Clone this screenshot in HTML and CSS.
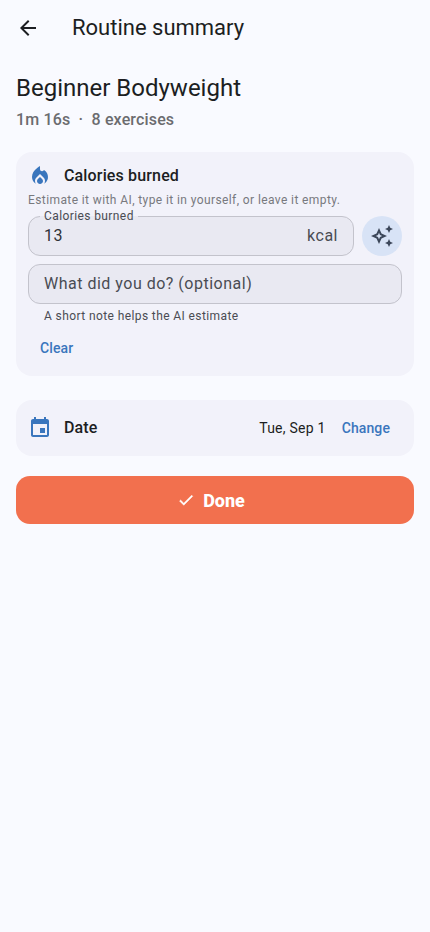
FILE: index.html
```html
<!DOCTYPE html>
<html lang="en">
<head>
<meta charset="utf-8">
<meta name="viewport" content="width=device-width, initial-scale=1">
<title>Routine summary</title>
<link rel="stylesheet" href="styles.css">
</head>
<body>
<header class="app-bar">
  <button class="back" aria-label="Back"><svg class="icon" viewBox="0 0 24 24"><path d="M20 11H7.83l5.59-5.59L12 4l-8 8 8 8 1.41-1.41L7.83 13H20v-2z"/></svg></button>
  <h1 class="app-title">Routine summary</h1>
</header>
<main class="content">
  <h2 class="routine-name">Beginner Bodyweight</h2>
  <p class="routine-meta">1m 16s &nbsp;·&nbsp; 8 exercises</p>

  <section class="card calories">
    <div class="card-head">
      <svg class="icon accent" viewBox="0 0 24 24"><path d="M16 6l-.44.55C14.38 8.02 12 7.19 12 5.3V2S4 6 4 13c0 2.92 1.56 5.47 3.89 6.86-.56-.79-.89-1.76-.89-2.8 0-1.32.52-2.56 1.47-3.5L12 10.1l3.53 3.47c.95.93 1.47 2.17 1.47 3.5 0 1.02-.31 1.96-.85 2.75 1.89-1.15 3.29-3.06 3.71-5.3.66-3.55-1.07-6.9-3.86-8.52z"/><path d="M12 12.9l-2.13 2.09C9.31 15.55 9 16.28 9 17.06 9 18.68 10.35 20 12 20s3-1.32 3-2.94c0-.78-.31-1.52-.87-2.07L12 12.9z"/></svg>
      <h3 class="card-title">Calories burned</h3>
    </div>
    <p class="hint">Estimate it with AI, type it in yourself, or leave it empty.</p>
    <div class="calorie-row">
      <div class="field">
        <span class="field-label">Calories burned</span>
        <span class="value">13</span>
        <span class="unit">kcal</span>
      </div>
      <button class="ai-button" aria-label="Estimate with AI"><svg class="icon" viewBox="0 0 24 24"><path d="M19 9l1.25-2.75L23 5l-2.75-1.25L19 1l-1.25 2.75L15 5l2.75 1.25L19 9zm0 6l-1.25 2.75L15 19l2.75 1.25L19 23l1.25-2.75L23 19l-2.75-1.25L19 15zm-7.5-5.5L9 4 6.5 9.5 1 12l5.5 2.5L9 20l2.5-5.5L17 12l-5.5-2.5zm-1.51 3.49L9 15.17l-.99-2.18L5.83 12l2.18-.99L9 8.83l.99 2.18 2.18.99-2.18.99z"/></svg></button>
    </div>
    <div class="field note"><span class="placeholder">What did you do? (optional)</span></div>
    <p class="helper">A short note helps the AI estimate</p>
    <button class="text-button clear">Clear</button>
  </section>

  <section class="card date">
    <svg class="icon accent" viewBox="0 0 24 24"><path d="M17 12h-5v5h5v-5zM16 1v2H8V1H6v2H5c-1.11 0-1.99.9-1.99 2L3 19c0 1.1.89 2 2 2h14c1.1 0 2-.9 2-2V5c0-1.1-.9-2-2-2h-1V1h-2zm3 18H5V8h14v11z"/></svg>
    <h3 class="card-title">Date</h3>
    <span class="date-value">Tue, Sep 1</span>
    <button class="text-button">Change</button>
  </section>

  <button class="done"><svg class="check" viewBox="0 0 24 24"><path d="M9 16.17L4.83 12l-1.42 1.41L9 19 21 7l-1.41-1.41z"/></svg><span>Done</span></button>
</main>
</body>
</html>
```

FILE: styles.css
```css
* { box-sizing: border-box; }

body {
  margin: 0;
  min-height: 100vh;
  background: #f9faff;
  color: #1c1e22;
  font-family: Roboto, "Liberation Sans", sans-serif;
}

h1, h2, h3, p { margin: 0; }

button {
  padding: 0;
  border: 0;
  background: none;
  color: inherit;
  font: inherit;
}

.icon {
  display: block;
  flex: none;
  width: 24px;
  height: 24px;
  fill: currentColor;
}

.accent { color: #3a76bd; }

.app-bar {
  display: flex;
  align-items: center;
  height: 56px;
}

.back {
  display: grid;
  place-items: center;
  width: 56px;
  height: 56px;
}

.app-title {
  margin-left: 16px;
  font-size: 22px;
  line-height: 28px;
  font-weight: 400;
}

.content { padding: 16px; }

.routine-name {
  font-size: 24px;
  line-height: 32px;
  font-weight: 400;
}

.routine-meta {
  margin-top: 4px;
  color: #6b6c6f;
  font-size: 16px;
  line-height: 24px;
  font-weight: 500;
  letter-spacing: 0.15px;
}

.card {
  border-radius: 16px;
  background: #f2f2fa;
}

.calories {
  height: 224px;
  margin-top: 20px;
  padding: 12px 12px 0;
}

.card-head {
  display: flex;
  align-items: center;
  gap: 12px;
  height: 24px;
}

.card-title {
  font-size: 16px;
  line-height: 24px;
  font-weight: 500;
  letter-spacing: 0.15px;
}

.hint {
  margin-top: 4px;
  color: #78797e;
  font-size: 12px;
  line-height: 16px;
  letter-spacing: 0.4px;
}

.calorie-row {
  display: flex;
  gap: 8px;
  margin-top: 8px;
}

.field {
  position: relative;
  display: flex;
  flex: 1;
  align-items: center;
  justify-content: space-between;
  height: 40px;
  padding: 0 15px;
  border: 1px solid #c3c3cc;
  border-radius: 12px;
  background: #e9e9f2;
  color: #4a4c53;
  font-size: 16px;
  line-height: 24px;
  letter-spacing: 0.5px;
}

.field-label {
  position: absolute;
  top: -9px;
  left: 11px;
  padding: 0 4px;
  background: linear-gradient(#f2f2fa 8px, #e9e9f2 8px);
  font-size: 12px;
  line-height: 16px;
  letter-spacing: 0.4px;
}

.value { color: #303238; }

.ai-button {
  display: grid;
  place-items: center;
  width: 40px;
  height: 40px;
  border-radius: 50%;
  background: #d8e3f6;
  color: #3c475a;
}

.note { margin-top: 8px; }

.helper {
  margin: 4px 16px 0;
  color: #4a4c53;
  font-size: 12px;
  line-height: 16px;
  letter-spacing: 0.4px;
}

.text-button {
  color: #3a76bd;
  font-size: 14px;
  line-height: 20px;
  font-weight: 500;
  letter-spacing: 0.1px;
}

.clear {
  display: block;
  margin: 14px 12px 0;
}

.date {
  display: flex;
  align-items: center;
  height: 56px;
  margin-top: 24px;
  padding: 0 24px 0 12px;
}

.date .card-title { margin-left: 12px; }

.date-value {
  margin: 0 16px 0 auto;
  font-size: 14px;
  line-height: 20px;
  letter-spacing: 0.25px;
}

.done {
  display: flex;
  align-items: center;
  justify-content: center;
  gap: 8px;
  width: 100%;
  height: 48px;
  margin-top: 20px;
  padding: 0 24px 0 16px;
  border-radius: 14px;
  background: #f2704e;
  color: #fff;
  font-size: 18px;
  line-height: 24px;
  font-weight: 800;
}

.done span { padding-top: 2px; }

.check {
  width: 18px;
  height: 18px;
  fill: currentColor;
  stroke: currentColor;
  stroke-width: 0.6;
}
```
